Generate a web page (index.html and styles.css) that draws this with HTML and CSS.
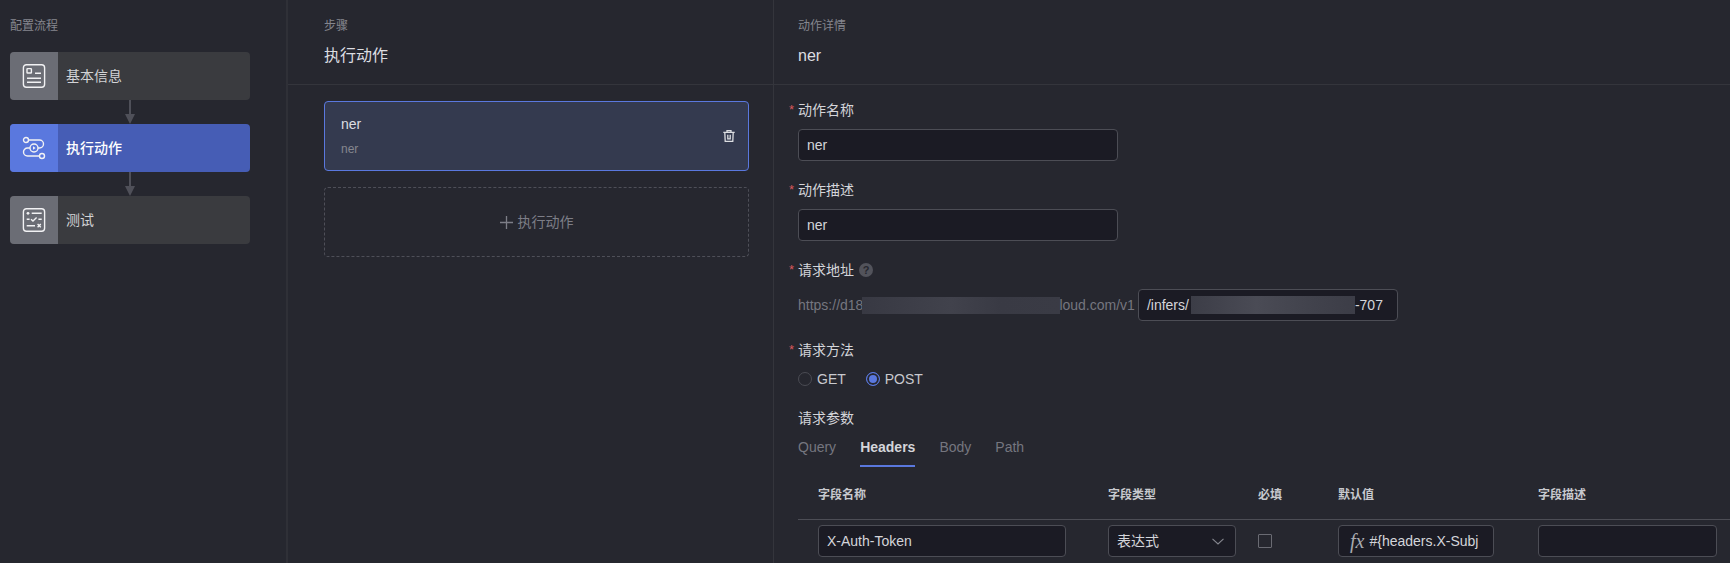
FILE: index.html
```html
<!DOCTYPE html>
<html lang="zh-CN">
<head>
<meta charset="utf-8">
<title>配置流程</title>
<link rel="stylesheet" href="styles.css">
</head>
<body>
<div class="app">
  <aside class="side">
    <div class="side-title">配置流程</div>
    <div class="step">
      <div class="step-icon">
        <svg class="ico" viewBox="0 0 24 24" fill="none" stroke="currentColor" stroke-width="1.4">
          <rect x="1.4" y="0.7" width="21.2" height="22.6" rx="3"/>
          <rect x="5" y="4.6" width="4.4" height="4.4" rx="0.6"/>
          <path d="M13 9.3H19M5 14.3H19M5 18.3H19"/>
        </svg>
      </div>
      <span>基本信息</span>
    </div>
    <div class="conn"><svg width="10" height="24" viewBox="0 0 10 24"><path d="M4 0H6V14H10L5 24L0 14H4Z" fill="#4f5059"/></svg></div>
    <div class="step active">
      <div class="step-icon">
        <svg class="ico" viewBox="0 0 24 24" fill="none" stroke="currentColor" stroke-width="1.4">
          <circle cx="4" cy="4" r="2.5"/>
          <path d="M6.5 4H17.5a4 4 0 0 1 0 8H16M8 12H5.5a4 4 0 0 0 0 8H17.5"/>
          <circle cx="12" cy="12" r="4"/>
          <path d="M11 10.2L13.6 12L11 13.8Z" fill="currentColor" stroke="none"/>
          <circle cx="20" cy="20" r="2.5"/>
        </svg>
      </div>
      <span>执行动作</span>
    </div>
    <div class="conn"><svg width="10" height="24" viewBox="0 0 10 24"><path d="M4 0H6V14H10L5 24L0 14H4Z" fill="#4f5059"/></svg></div>
    <div class="step">
      <div class="step-icon">
        <svg class="ico" viewBox="0 0 24 24" fill="none" stroke="currentColor" stroke-width="1.4">
          <rect x="1.4" y="0.7" width="21.2" height="22.6" rx="3"/>
          <circle cx="6" cy="5.3" r="1.4" fill="currentColor" stroke="none"/>
          <path d="M9.7 5.3H19.7M4.7 11.3H7.6M16.4 11.3H19.7M4.7 17.7H13"/>
          <path d="M9 11.2L11 13L14.6 9.6M15.6 16L18.8 19.2M18.8 16L15.6 19.2"/>
        </svg>
      </div>
      <span>测试</span>
    </div>
  </aside>

  <section class="mid">
    <header class="head">
      <div class="head-sub">步骤</div>
      <div class="head-main">执行动作</div>
    </header>
    <div class="mid-body">
      <div class="card">
        <div class="card-text">
          <div class="card-name">ner</div>
          <div class="card-desc">ner</div>
        </div>
        <svg class="trash" viewBox="0 0 12 12" fill="none" stroke="currentColor" stroke-width="1.3">
          <path d="M0.3 2.4H11.7M4 2.4V0.7H8V2.4M1.8 2.4L2.2 11.3H9.8L10.2 2.4M4.8 4.8V8.8H7.2V4.8"/>
        </svg>
      </div>
      <div class="add">
        <svg class="plus" viewBox="0 0 13 13" stroke="currentColor" stroke-width="1.3"><path d="M0 6.5H13M6.5 0V13"/></svg>
        <span>执行动作</span>
      </div>
    </div>
  </section>

  <main class="detail">
    <header class="head">
      <div class="head-sub">动作详情</div>
      <div class="head-main">ner</div>
    </header>
    <div class="detail-body">
      <div class="label"><span class="req">*</span>动作名称</div>
      <div class="input w320">ner</div>

      <div class="label gap"><span class="req">*</span>动作描述</div>
      <div class="input w320">ner</div>

      <div class="label gap"><span class="req">*</span>请求地址<span class="help">?</span></div>
      <div class="url-row">
        <span class="url-a">https://d18</span>
        <span class="blur blur-a"></span>
        <span class="url-b">loud.com/v1</span>
        <div class="input w260">
          <span>/infers/</span><span class="blur blur-b"></span><span>-707</span>
        </div>
      </div>

      <div class="label gap"><span class="req">*</span>请求方法</div>
      <div class="radios">
        <span class="radio"><i class="dot"></i>GET</span>
        <span class="radio on"><i class="dot"></i>POST</span>
      </div>

      <div class="label gap">请求参数</div>
      <div class="tabs">
        <span class="tab">Query</span>
        <span class="tab sel">Headers</span>
        <span class="tab">Body</span>
        <span class="tab">Path</span>
      </div>

      <div class="grid thead">
        <span>字段名称</span><span>字段类型</span><span>必填</span><span>默认值</span><span>字段描述</span>
      </div>
      <div class="grid trow">
        <div class="input name-in">X-Auth-Token</div>
        <div class="input type-in">
          <span>表达式</span>
          <svg class="chev" viewBox="0 0 12 7" fill="none" stroke="currentColor" stroke-width="1.1"><path d="M0.5 0.8L6 6L11.5 0.8"/></svg>
        </div>
        <div class="check-cell"><i class="check"></i></div>
        <div class="input fx-in"><span class="fx">fx</span><span class="fx-val">#{headers.X-Subj</span></div>
        <div class="input desc-in"></div>
      </div>
    </div>
  </main>
</div>
</body>
</html>
```

FILE: styles.css
```css
* { box-sizing: border-box; }
html, body { margin: 0; height: 100%; overflow: hidden; }
body {
  background: #26272f;
  color: #d4d5da;
  font-family: "Liberation Sans", "Noto Sans CJK SC", sans-serif;
  font-size: 14px;
  line-height: 20px;
}
.app { display: flex; height: 563px; overflow: hidden; }

/* left column */
.side {
  width: 288px;
  flex: none;
  padding: 16px 10px 0;
  border-right: 2px solid #2f3037;
}
.side-title { font-size: 12px; color: #85868e; margin-bottom: 16px; }
.step {
  width: 240px;
  height: 48px;
  display: flex;
  align-items: center;
  gap: 8px;
  background: #3a3b3f;
  border-radius: 4px;
  overflow: hidden;
  color: #d2d3d6;
}
.step-icon {
  width: 48px;
  height: 48px;
  display: flex;
  align-items: center;
  justify-content: center;
  background: #6b6d75;
  color: #f2f2f4;
}
.ico { width: 24px; height: 24px; display: block; }
.step.active { background: #465db5; color: #fff; font-weight: 500; }
.step.active .step-icon { background: #5a78de; }
.conn { width: 240px; height: 24px; display: flex; justify-content: center; }
.conn svg { display: block; }

/* middle column */
.mid { width: 486px; flex: none; border-right: 1px solid #34353c; }
.head { height: 85px; padding: 16px 0 0 36px; border-bottom: 1px solid #34353c; }
.head-sub { font-size: 12px; color: #85868e; height: 20px; }
.head-main { font-size: 16px; line-height: 24px; margin-top: 8px; color: #dcdde1; }
.mid-body { padding: 16px 24px 0 36px; }
.card {
  height: 70px;
  display: flex;
  align-items: center;
  justify-content: space-between;
  padding: 0 13px 0 16px;
  background: #343a4f;
  border: 1px solid #5a78de;
  border-radius: 4px;
  margin-bottom: 16px;
}
.card-name { color: #dcdde1; line-height: 20px; }
.card-desc { font-size: 12px; color: #85868e; line-height: 20px; margin-top: 5px; }
.trash { width: 12px; height: 12px; color: #dcdde1; display: block; }
.add {
  height: 70px;
  display: flex;
  align-items: center;
  justify-content: center;
  gap: 5px;
  border: 1px dashed #4e4f58;
  border-radius: 4px;
  color: #7d7e87;
}
.plus { width: 13px; height: 13px; display: block; }

/* right column */
.detail { flex: 1; min-width: 0; }
.detail .head { padding-left: 24px; }
.detail-body { padding: 16px 0 0 24px; }
.label {
  color: #d4d5da;
  height: 20px;
  padding-bottom: 2px;
  margin-bottom: 8px;
  display: flex;
  align-items: center;
}
.gap { margin-top: 20px; }
.req {
  width: 9px;
  margin-left: -9px;
  color: #d9575b;
  font-size: 13px;
  line-height: 12px;
  align-self: flex-start;
  margin-top: 3px;
}
.help {
  width: 14px;
  height: 14px;
  margin-left: 5px;
  border-radius: 50%;
  background: #52535b;
  color: #26272f;
  font-size: 11px;
  font-weight: 700;
  line-height: 14px;
  text-align: center;
}
.input {
  height: 32px;
  display: flex;
  align-items: center;
  padding: 0 8px;
  background: #1b1b24;
  border: 1px solid #4c4d55;
  border-radius: 4px;
  color: #d4d5da;
  overflow: hidden;
  white-space: nowrap;
}
.w320 { width: 320px; }
.w260 { width: 260px; flex: none; margin-left: 3px; }
.url-row { display: flex; align-items: center; height: 32px; color: #75767f; }
.blur { display: block; height: 18px; flex: none; background: linear-gradient(90deg, #383943, #41424c 45%, #393a44 70%, #3a3b45); }
.blur-a { width: 198px; height: 17px; margin-left: -1px; }
.url-b { margin-left: -1px; }
.blur-b { width: 164px; margin-left: 2px; background: linear-gradient(90deg, #3c3d47, #4a4b55 40%, #41424c 75%, #3c3d47); }
.radios { display: flex; gap: 20px; height: 20px; }
.radio { display: flex; align-items: center; gap: 5px; color: #c8c9ce; }
.dot { width: 14px; height: 14px; border-radius: 50%; border: 1px solid #4a4b53; display: block; }
.on .dot { border-color: #5a78de; background: #5a78de; box-shadow: inset 0 0 0 2px #26272f; }
.tabs { display: flex; gap: 24px; margin-top: 1px; }
.tab { padding: 0 0 8px; height: 30px; color: #75767f; }
.tab.sel { color: #d4d5da; font-weight: 700; border-bottom: 2px solid #5a78de; }
.grid {
  display: grid;
  grid-template-columns: 290px 150px 80px 200px 179px;
  padding-left: 20px;
}
.thead {
  padding-top: 18px;
  padding-bottom: 14px;
  border-bottom: 1px solid #4c4d55;
  font-size: 12px;
  font-weight: 700;
  color: #c8c9ce;
}
.trow { padding-top: 5px; }
.name-in { width: 248px; }
.type-in { width: 128px; justify-content: space-between; padding-right: 11px; }
.chev { width: 12px; height: 7px; color: #85868e; display: block; }
.check-cell { display: flex; align-items: center; height: 32px; }
.check { width: 14px; height: 14px; border: 1px solid #6a6b73; border-radius: 1px; display: block; }
.fx-in { width: 156px; padding-left: 11px; }
.fx {
  font-family: "Liberation Serif", serif;
  font-style: italic;
  font-size: 20px;
  color: #a8a9af;
  margin-right: 5px;
  flex: none;
}
.fx-val { flex: none; }
.desc-in { width: 179px; }
```
